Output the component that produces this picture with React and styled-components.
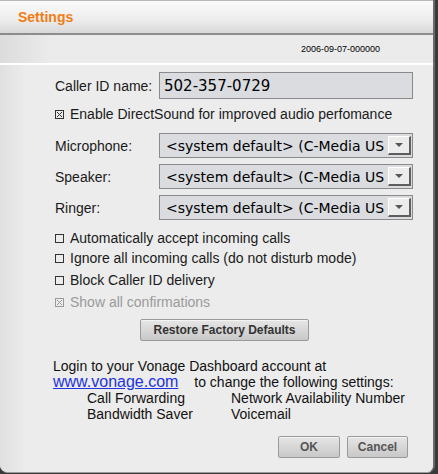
import React from 'react';
import styled, { createGlobalStyle } from 'styled-components';

const Global = createGlobalStyle`
    html, body { margin: 0; padding: 0; background: #3a3a3a; }
    body { font-family: "Liberation Sans", Arial, sans-serif; }
`;

const Window = styled.div`
    width: 435px;
    height: 473px;
    box-sizing: border-box;
    background: #ececec;
    border-right: 2px solid #6a6a6a;
    border-bottom: 1px solid #9a9a9a;
    border-radius: 0 0 8px 8px;
    display: flex;
    flex-direction: column;
    overflow: hidden;
`;

const Header = styled.div`
    height: 35px;
    box-sizing: border-box;
    border-top: 1px solid #b8b8b8;
    border-bottom: 2px solid #8c8c8c;
    background: linear-gradient(#fbfbfb, #ececec 60%, #d8d8d8);
    display: flex;
    align-items: center;
    padding: 0 0 1px 18px;
`;

const Title = styled.h1`
    margin: 0;
    font-size: 14px;
    font-weight: bold;
    color: #f07d14;
`;

const SubBand = styled.div`
    height: 30px;
    box-sizing: border-box;
    background: linear-gradient(90deg, #dcdcdc, #ebebeb 12%, #ebebeb);
    border-bottom: 2px solid #ffffff;
    display: flex;
    align-items: center;
    justify-content: flex-end;
    padding: 0 53px 0 0;
    font-size: 9px;
    color: #000;
`;

const Body = styled.div`
    flex: 1;
    display: flex;
    flex-direction: column;
    padding: 7px 0 0 55px;
    background: linear-gradient(90deg, #e0e0e0, #ececec 6%);
`;

const Row = styled.div`
    display: flex;
    align-items: center;
    height: ${p => p.h || 25}px;
    margin-bottom: ${p => p.mb || 0}px;
`;

const Label = styled.span`
    width: 104px;
    font-size: 14px;
    color: #1a1a1a;
`;

const Field = styled.div`
    width: 254px;
    height: 27px;
    box-sizing: border-box;
    border: 1px solid #8a8a8a;
    background: #dadce0;
    font-family: "DejaVu Sans", Verdana, sans-serif;
    font-size: 15px;
    display: flex;
    align-items: center;
    padding-left: 4px;
    color: #000;
`;

const Select = styled.div`
    width: 254px;
    height: 25px;
    box-sizing: border-box;
    border: 1px solid #8a8a8a;
    background: #dadce0;
    display: flex;
    align-items: center;
    overflow: hidden;
`;

const SelectText = styled.span`
    flex: 1;
    white-space: nowrap;
    overflow: hidden;
    font-family: "DejaVu Sans", Verdana, sans-serif;
    font-size: 14px;
    padding-left: 6px;
    color: #000;
`;

const Arrow = styled.div`
    width: 23px;
    height: 19px;
    margin: 0 1px 0 3px;
    box-sizing: border-box;
    background: #ececec;
    border-style: solid;
    border-width: 1px 2px 2px 1px;
    border-color: #ffffff #5e5e5e #5e5e5e #ffffff;
    display: flex;
    align-items: center;
    justify-content: center;
    &::after {
        content: "";
        border-left: 4px solid transparent;
        border-right: 4px solid transparent;
        border-top: 4px solid #555;
    }
`;

const Check = styled.div`
    display: flex;
    align-items: center;
    gap: 6px;
    height: ${p => p.h || 20}px;
    font-size: 14px;
    color: ${p => (p.disabled ? '#9a9a9a' : '#1a1a1a')};
`;

const Box = styled.span`
    width: 9px;
    height: 9px;
    box-sizing: border-box;
    border: 1px solid ${p => (p.disabled ? '#9a9a9a' : '#333')};
    position: relative;
    flex-shrink: 0;
    margin-top: 1px;
    svg { position: absolute; left: 0; top: 0; }
`;

const Button = styled.button`
    height: 22px;
    box-sizing: border-box;
    width: ${p => p.w}px;
    border: 1px solid #9a9a9a;
    border-radius: 2px;
    background: linear-gradient(#e6e6e6, #c8c8c8);
    box-shadow: inset 0 1px 0 #f4f4f4;
    font-family: "Liberation Sans", Arial, sans-serif;
    font-size: 12px;
    font-weight: bold;
    color: ${p => p.color || '#333'};
    padding: 0;
`;

const Center = styled.div`
    display: flex;
    padding-left: 85px;
    margin: 6px 0 0;
`;

const Info = styled.div`
    margin: 17px 0 0 -2px;
    font-size: 14px;
    color: #111;
    line-height: 16px;
`;

const Link = styled.a`
    color: #2233dd;
    font-size: 16px;
    line-height: 1;
    text-decoration: underline;
    margin-right: 12px;
`;

const Grid = styled.div`
    display: grid;
    grid-template-columns: 144px auto;
    padding-left: 34px;
`;

const Footer = styled.div`
    display: flex;
    justify-content: flex-end;
    gap: 7px;
    padding: 14px 25px 0 0;
`;

const XBox = ({ checked, disabled }) => (
    <Box disabled={disabled}>
        {checked && (
            <svg width="7" height="7" viewBox="0 0 7 7">
                <path d="M1 1L6 6M6 1L1 6" stroke={disabled ? '#9a9a9a' : '#333'} strokeWidth="1" />
            </svg>
        )}
    </Box>
);

const DeviceRow = ({ label }) => (
    <Row h={31}>
        <Label>{label}</Label>
        <Select>
            <SelectText>&lt;system default&gt; (C-Media USB Audio Device)</SelectText>
            <Arrow />
        </Select>
    </Row>
);

export default function App() {
    return (
        <>
            <Global />
            <Window>
                <Header><Title>Settings</Title></Header>
                <SubBand>2006-09-07-000000</SubBand>
                <Body>
                    <Row h={27} mb={4}>
                        <Label>Caller ID name:</Label>
                        <Field>502-357-0729</Field>
                    </Row>
                    <Check h={22}><XBox checked />Enable DirectSound for improved audio perfomance</Check>
                    <Row h={5} />
                    <DeviceRow label="Microphone:" />
                    <DeviceRow label="Speaker:" />
                    <DeviceRow label="Ringer:" />
                    <Row h={5} />
                    <Check><XBox />Automatically accept incoming calls</Check>
                    <Check><XBox />Ignore all incoming calls (do not disturb mode)</Check>
                    <Check h={23}><XBox />Block Caller ID delivery</Check>
                    <Check h={22} disabled><XBox checked disabled />Show all confirmations</Check>
                    <Center><Button w={169}>Restore Factory Defaults</Button></Center>
                    <Info>
                        <div>Login to your Vonage Dashboard account at</div>
                        <div><Link href="#">www.vonage.com</Link> to change the following settings:</div>
                        <Grid>
                            <span>Call Forwarding</span><span>Network Availability Number</span>
                            <span>Bandwidth Saver</span><span>Voicemail</span>
                        </Grid>
                    </Info>
                    <Footer>
                        <Button w={62} color="#555">OK</Button>
                        <Button w={61} color="#555">Cancel</Button>
                    </Footer>
                </Body>
            </Window>
        </>
    );
}
